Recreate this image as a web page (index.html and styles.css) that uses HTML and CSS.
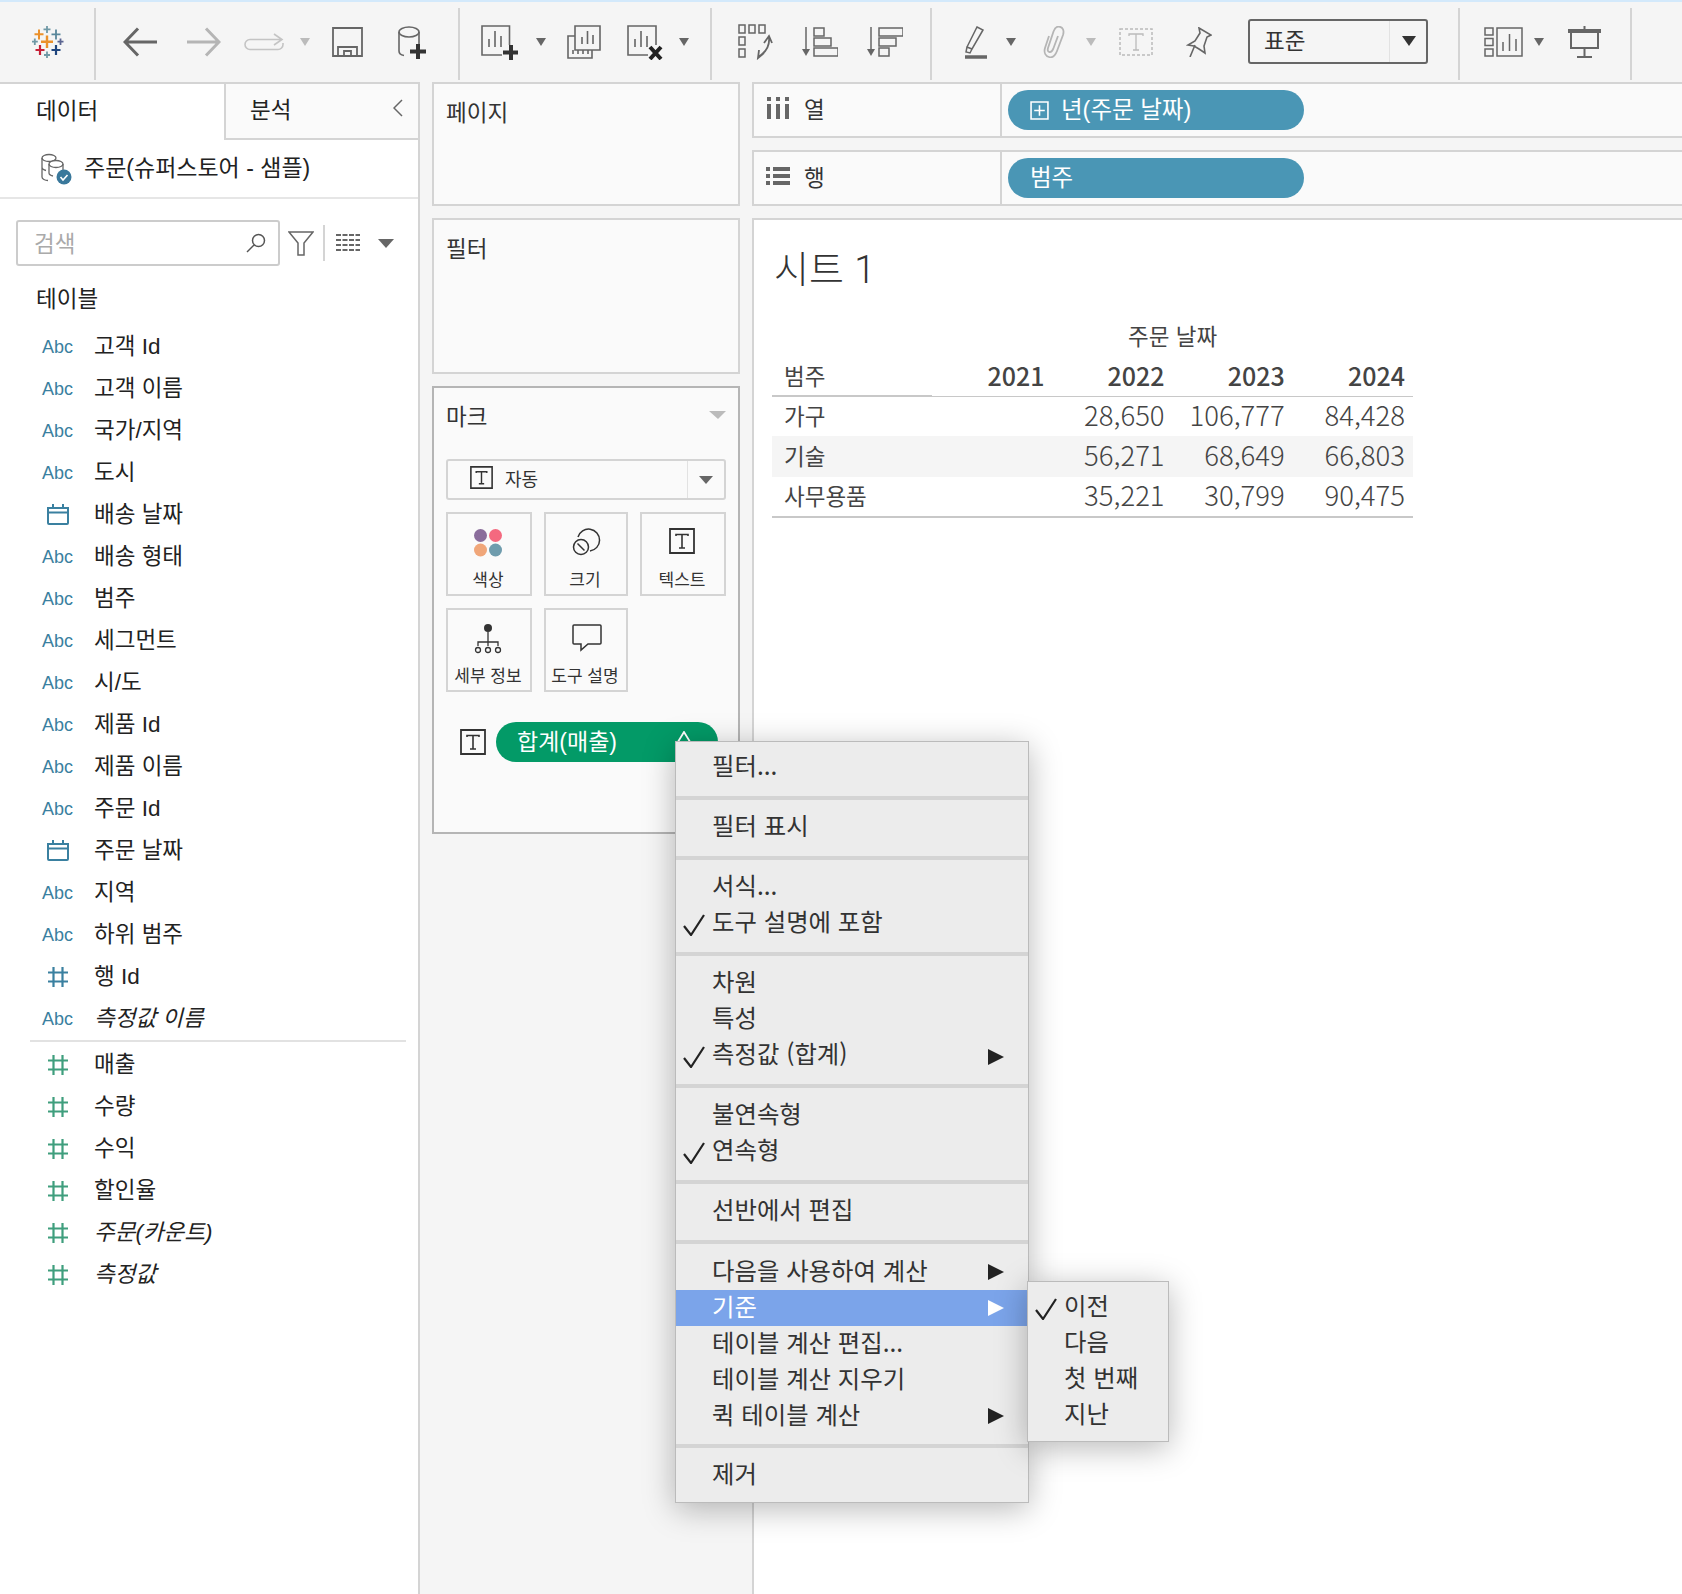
FILE: index.html
```html
<!DOCTYPE html>
<html lang="ko">
<head>
    <meta charset="UTF-8">
    <meta name="viewport" content="width=device-width, initial-scale=1.0">
    <title>Tableau - 시트 1</title>
    <link rel="stylesheet" href="styles.css">
</head>
<body>
    <svg class="defs" width="0" height="0">
        <defs>
            <symbol id="t-box" viewBox="0 0 26 26">
                <path d="M1 1h24v24H1z" fill="none" stroke="#333" stroke-width="1.800"/>
                <path d="M7 8V6.500h12V8M13 6.500V20M10 20h6" fill="none" stroke="#333" stroke-width="1.600"/>
            </symbol>
            <symbol id="cal" viewBox="0 0 22 22">
                <path d="M1 5h20v15a1 1 0 0 1-1 1H2a1 1 0 0 1-1-1zM1 9.500h20M6 1v4M16 1v4" fill="none" stroke="#3a80a0" stroke-width="2"/>
            </symbol>
            <symbol id="hash" viewBox="0 0 20 20">
                <path d="M5.500 0v20M14.500 0v20M0 5.500h20M0 14.500h20" fill="none" stroke="currentColor" stroke-width="2.200"/>
            </symbol>
            <symbol id="check" viewBox="0 0 22 22">
                <path d="M1 12l7 9L21 1" fill="none" stroke="#222" stroke-width="2.200"/>
            </symbol>
        </defs>
    </svg>

    <div class="toolbar">
        <div class="tool-group group-logo">
            <svg class="tool-logo" width="32" height="32" viewBox="0 0 32 32" fill="none" stroke-width="1.800">
                <path d="M15 0v7M11.500 3.300h7" stroke="#7099a6"/>
                <path d="M7 3.500v10M2.500 8.300h9" stroke="#eb912b" stroke-width="2"/>
                <path d="M24 3.500v10M19.500 8.300h9" stroke="#59879b"/>
                <path d="M15 9.500v12.500M9 15.700h12" stroke="#eb912b" stroke-width="2.400"/>
                <path d="M2.800 12.500v6.500M0 15.700h5.800" stroke="#7099a6"/>
                <path d="M28.500 12.500v6.500M25.500 15.700h6" stroke="#5b6591"/>
                <path d="M8 19v10M3.500 24h9" stroke="#c72037" stroke-width="2.200"/>
                <path d="M24 19v10M19.500 24h9" stroke="#1f457e" stroke-width="2.200"/>
                <path d="M15 25.500v6.500M12 29h6" stroke="#7099a6"/>
            </svg>
        </div>
        <div class="tool-group group-history">
            <svg class="tool-back" width="34" height="30" viewBox="0 0 34 30" fill="none" stroke="#666" stroke-width="3"><path d="M15 1.500L2 15l13 13.500M2 15h32"/></svg>
            <svg class="tool-forward" width="34" height="30" viewBox="0 0 34 30" fill="none" stroke="#b5b5b5" stroke-width="3"><path d="M19 1.500L32 15 19 28.500M32 15H0"/></svg>
            <svg class="tool-redo" width="40" height="18" viewBox="0 0 40 18" fill="none" stroke="#c4c4c4" stroke-width="1.600"><path d="M30 1l8 5.500-8 5.500M38 6.500H6a5 5 0 0 0-5 5v0a5 5 0 0 0 5 5h28a5 5 0 0 0 5-5V10"/></svg>
            <span class="caret caret-light caret-redo"></span>
            <svg class="tool-save" width="31" height="30" viewBox="0 0 31 30" fill="none" stroke="#666" stroke-width="1.800"><path d="M1 1h29v28H1zM6 29V20h19v9M12 29v-5h7v5"/></svg>
            <svg class="tool-cylinder" width="28" height="33" viewBox="0 0 28 33" fill="none" stroke="#666" stroke-width="1.600"><ellipse cx="11" cy="6" rx="10" ry="5"/><path d="M1 6v19c0 2.500 2 4 5 4.500M21 6v12"/><path d="M20 18v15M12 25.500h16" stroke="#333" stroke-width="4"/></svg>
        </div>
        <div class="tool-group group-sheet">
            <svg class="tool-new" width="37" height="35" viewBox="0 0 37 35" fill="none" stroke="#666" stroke-width="1.600"><path d="M28.500 20V1H1v29h20M8 22v-8M14 22V6M20 22V11"/><path d="M30 20v15M22 27.500h15" stroke="#333" stroke-width="4"/></svg>
            <span class="caret caret-new"></span>
            <svg class="tool-dup" width="34" height="34" viewBox="0 0 34 34" fill="none" stroke="#666" stroke-width="1.600"><path d="M8 1h25v24H8zM15 19v-7M20.500 19V6M26 19V10M8 11H1v22h24v-8M6 25v4M11 25v4M16 25v4M21 25v4"/></svg>
            <svg class="tool-clear" width="36" height="35" viewBox="0 0 36 35" fill="none" stroke="#666" stroke-width="1.600"><path d="M29 20V1H1v29h20M8 22v-8M14 22V6M20 22V11"/><path d="M23 22l11 12M34 22L23 34" stroke="#222" stroke-width="4"/></svg>
            <span class="caret caret-clear"></span>
        </div>
        <div class="tool-group group-arrange">
            <svg class="tool-swap" width="35" height="36" viewBox="0 0 35 36" fill="none" stroke="#666" stroke-width="1.500"><path d="M1 1h6v8H1zM11 1h6v8h-6zM21 1h6v8h-6zM1 13h6v8H1zM1 25h6v8H1z"/><path d="M31 13c1 9-4 16-11 20M26 19l5-7 3 7M26 29l-6 5 1-8" stroke-width="1.800"/></svg>
            <svg class="tool-sort" width="36" height="30" viewBox="0 0 36 30" fill="none" stroke="#666" stroke-width="1.500"><path d="M4 0v26"/><path d="M0 22h8l-4 7z" fill="#666" stroke="none"/><path d="M12 1h10v8H12zM12 11h17v8H12zM12 21h24v8H12z"/></svg>
            <svg class="tool-sort" width="36" height="30" viewBox="0 0 36 30" fill="none" stroke="#666" stroke-width="1.500"><path d="M4 0v26"/><path d="M0 22h8l-4 7z" fill="#666" stroke="none"/><path d="M12 1h24v8H12zM12 11h17v8H12zM12 21h10v8H12z"/></svg>
        </div>
        <div class="tool-group group-format">
            <svg class="tool-pen" width="22" height="33" viewBox="0 0 22 33" fill="none" stroke="#666" stroke-width="1.500"><path d="M12 1l6 3-11 19-5-2zM2 21l-1 5 4 1 2-4"/><path d="M0 31h22" stroke-width="3.500"/></svg>
            <span class="caret caret-pen"></span>
            <svg class="tool-clip" width="24" height="32" viewBox="0 0 24 32" fill="none" stroke="#b5b5b5" stroke-width="1.800"><path d="M8 10L4 22c-1.500 5 1 8 4 9s6-1 8-6l6-16c1.500-5-.5-7.500-3-8.200s-5 .7-6.500 4.700L7 22c-.7 2.500 0 3.700 1.500 4s2.800-.8 3.800-3.300L17 10"/></svg>
            <span class="caret caret-light caret-clip"></span>
            <svg class="tool-tbox" width="34" height="28" viewBox="0 0 34 28" fill="none" stroke="#bbb"><path d="M1 1h32v26H1z" stroke-width="1.500" stroke-dasharray="3 2"/><path d="M10 8V6h14v2M17 6v16M14 22h6" stroke-width="1.300"/></svg>
            <svg class="tool-pin" width="26" height="30" viewBox="0 0 26 30" fill="none" stroke="#666" stroke-width="1.600"><path d="M13 1l12 7-4 2-3 9 1 7-6-4-5-3-6-1 7-4 5-8zM9 18L4 30"/></svg>
            <div class="fit-select">
                <span class="fit-value">표준</span>
                <span class="fit-arrow"><span class="caret caret-dark"></span></span>
            </div>
        </div>
        <div class="tool-group group-show">
            <svg class="tool-showme" width="39" height="30" viewBox="0 0 39 30" fill="none" stroke="#666" stroke-width="1.500"><path d="M1 1h8v7H1zM1 11.500h8v7H1zM1 22h8v7H1zM13 1h25v28H13zM19 24v-9M25.500 24V7M32 24V12"/></svg>
            <span class="caret caret-show"></span>
            <svg class="tool-present" width="33" height="32" viewBox="0 0 33 32" fill="none" stroke="#666" stroke-width="2"><path d="M3 4v18h27V4M16.500 0v4M16.500 22v9M9 31h15"/><path d="M0 5h33" stroke-width="4"/></svg>
        </div>
    </div>

    <div class="workspace">
        <div class="data-pane">
            <div class="pane-tabs">
                <div class="pane-tab tab-active">데이터</div>
                <div class="pane-tab tab-other">
                    <span>분석</span>
                    <svg width="10" height="18" viewBox="0 0 10 18" fill="none" stroke="#666" stroke-width="1.500"><path d="M9 1L1 9l8 8"/></svg>
                </div>
            </div>
            <div class="source-row">
                <svg width="32" height="32" viewBox="0 0 32 32" fill="none" stroke="#666" stroke-width="1.300">
                    <ellipse cx="9" cy="5" rx="7" ry="3.500"/>
                    <path d="M2 5v19c0 2 3 3.500 6 3.500M2 14c0 2 2 3 4 3.500"/>
                    <ellipse cx="16" cy="11" rx="7" ry="3.500" fill="#fff"/>
                    <path d="M9 11v9c0 1.500 2 2.500 4 3M23 11v6"/>
                    <circle cx="24" cy="24" r="7.500" fill="#39789b" stroke="none"/>
                    <path d="M20.500 24l2.500 3 4.500-5" stroke="#fff" stroke-width="1.600"/>
                </svg>
                <span class="source-name">주문(슈퍼스토어 - 샘플)</span>
            </div>
            <div class="search-row">
                <div class="search-box">
                    <span class="search-text">검색</span>
                    <svg width="20" height="20" viewBox="0 0 20 20" fill="none" stroke="#555" stroke-width="1.500"><circle cx="12.500" cy="7.500" r="6"/><path d="M8 12l-7 7"/></svg>
                </div>
                <svg class="funnel" width="26" height="25" viewBox="0 0 26 25" fill="none" stroke="#666" stroke-width="1.500"><path d="M1 1h24l-9 11v12h-6V12z"/></svg>
                <span class="search-divider"></span>
                <svg class="list-icon" width="24" height="18" viewBox="0 0 24 18" fill="none" stroke="#666" stroke-width="2" stroke-dasharray="5 1.500"><path d="M0 1h24M0 6h24M0 11h24M0 16h24"/></svg>
                <span class="caret caret-list"></span>
            </div>
            <div class="section-title">테이블</div>
            <ul class="fields">
                <li class="field"><span class="field-type abc">Abc</span><span>고객 Id</span></li>
                <li class="field"><span class="field-type abc">Abc</span><span>고객 이름</span></li>
                <li class="field"><span class="field-type abc">Abc</span><span>국가/지역</span></li>
                <li class="field"><span class="field-type abc">Abc</span><span>도시</span></li>
                <li class="field"><span class="field-type date"><svg width="22" height="22"><use href="#cal"/></svg></span><span>배송 날짜</span></li>
                <li class="field"><span class="field-type abc">Abc</span><span>배송 형태</span></li>
                <li class="field"><span class="field-type abc">Abc</span><span>범주</span></li>
                <li class="field"><span class="field-type abc">Abc</span><span>세그먼트</span></li>
                <li class="field"><span class="field-type abc">Abc</span><span>시/도</span></li>
                <li class="field"><span class="field-type abc">Abc</span><span>제품 Id</span></li>
                <li class="field"><span class="field-type abc">Abc</span><span>제품 이름</span></li>
                <li class="field"><span class="field-type abc">Abc</span><span>주문 Id</span></li>
                <li class="field"><span class="field-type date"><svg width="22" height="22"><use href="#cal"/></svg></span><span>주문 날짜</span></li>
                <li class="field"><span class="field-type abc">Abc</span><span>지역</span></li>
                <li class="field"><span class="field-type abc">Abc</span><span>하위 범주</span></li>
                <li class="field"><span class="field-type dim"><svg width="20" height="20"><use href="#hash"/></svg></span><span>행 Id</span></li>
                <li class="field italic"><span class="field-type abc">Abc</span><span>측정값 이름</span></li>
            </ul>
            <ul class="fields measures">
                <li class="field"><span class="field-type measure"><svg width="20" height="20"><use href="#hash"/></svg></span><span>매출</span></li>
                <li class="field"><span class="field-type measure"><svg width="20" height="20"><use href="#hash"/></svg></span><span>수량</span></li>
                <li class="field"><span class="field-type measure"><svg width="20" height="20"><use href="#hash"/></svg></span><span>수익</span></li>
                <li class="field"><span class="field-type measure"><svg width="20" height="20"><use href="#hash"/></svg></span><span>할인율</span></li>
                <li class="field italic"><span class="field-type measure"><svg width="20" height="20"><use href="#hash"/></svg></span><span>주문(카운트)</span></li>
                <li class="field italic"><span class="field-type measure"><svg width="20" height="20"><use href="#hash"/></svg></span><span>측정값</span></li>
            </ul>
        </div>

        <div class="cards-col">
            <div class="card pages-card"><div class="card-title">페이지</div></div>
            <div class="card filters-card"><div class="card-title">필터</div></div>
            <div class="card marks-card">
                <div class="marks-head">
                    <span>마크</span>
                    <span class="caret caret-marks"></span>
                </div>
                <div class="mark-type">
                    <div class="mark-type-value">
                        <svg width="23" height="23"><use href="#t-box"/></svg>
                        <span>자동</span>
                    </div>
                    <span class="mark-type-arrow"><span class="caret caret-type"></span></span>
                </div>
                <div class="mark-grid">
                    <div class="mark-btn">
                        <svg width="30" height="30" viewBox="0 0 30 30">
                            <circle cx="7.500" cy="7.500" r="6.500" fill="#8a6d9b"/>
                            <circle cx="22.500" cy="7.500" r="6.500" fill="#f4697f"/>
                            <circle cx="7.500" cy="22" r="6.500" fill="#f0a679"/>
                            <circle cx="22.500" cy="22" r="6.500" fill="#6f9cad"/>
                        </svg>
                        <span>색상</span>
                    </div>
                    <div class="mark-btn">
                        <svg class="icon-mid" width="30" height="30" viewBox="0 0 30 30" fill="none" stroke="#333" stroke-width="1.500">
                            <path d="M6 11a11 11 0 1 1 12 14"/>
                            <circle cx="9" cy="21" r="7.500"/>
                            <path d="M5.500 17.500l7 7"/>
                        </svg>
                        <span>크기</span>
                    </div>
                    <div class="mark-btn">
                        <svg class="icon-text" width="26" height="26"><use href="#t-box"/></svg>
                        <span>텍스트</span>
                    </div>
                    <div class="mark-btn">
                        <svg width="28" height="30" viewBox="0 0 28 30" fill="none" stroke="#333" stroke-width="1.300">
                            <circle cx="14" cy="4" r="4" fill="#333" stroke="none"/>
                            <path d="M14 8v14M4 22v-4h20v4"/>
                            <circle cx="4" cy="26" r="2.500"/><circle cx="14" cy="26" r="2.500"/><circle cx="24" cy="26" r="2.500"/>
                        </svg>
                        <span>세부 정보</span>
                    </div>
                    <div class="mark-btn">
                        <svg class="icon-mid" width="30" height="28" viewBox="0 0 30 28" fill="none" stroke="#333" stroke-width="1.500"><path d="M2 1h26a1 1 0 0 1 1 1v17a1 1 0 0 1-1 1H16l-7 6v-6H2a1 1 0 0 1-1-1V2a1 1 0 0 1 1-1z"/></svg>
                        <span>도구 설명</span>
                    </div>
                </div>
                <div class="mark-field">
                    <svg width="26" height="26"><use href="#t-box"/></svg>
                    <div class="pill pill-measure">
                        <span class="pill-text">합계(매출)</span>
                        <svg class="pill-delta" width="18" height="14" viewBox="0 0 18 14" fill="none" stroke="#fff" stroke-width="1.800"><path d="M9 1L1 14h16z"/></svg>
                    </div>
                </div>
            </div>
        </div>

        <div class="view-col">
            <div class="shelf">
                <div class="shelf-label">
                    <svg width="24" height="22" viewBox="0 0 22 22" fill="#666"><path d="M0 7h4v15H0zM9 7h4v15H9zM18 7h4v15h-4zM0 0h4v4H0zM9 0h4v4H9zM18 0h4v4h-4z"/></svg>
                    <span>열</span>
                </div>
                <div class="shelf-pills">
                    <div class="pill pill-dim">
                        <svg width="19" height="19" viewBox="0 0 18 18" fill="none" stroke="#fff" stroke-width="1.500"><path d="M1 1h16v16H1zM9 4v10M4 9h10"/></svg>
                        <span class="pill-text">년(주문 날짜)</span>
                    </div>
                </div>
            </div>
            <div class="shelf">
                <div class="shelf-label">
                    <svg width="24" height="20" viewBox="0 0 24 20" fill="#666"><path d="M0 1h4v4H0zM7 1h17v4H7zM0 8h4v4H0zM7 8h17v4H7zM0 15h4v4H0zM7 15h17v4H7z"/></svg>
                    <span>행</span>
                </div>
                <div class="shelf-pills">
                    <div class="pill pill-dim"><span class="pill-text">범주</span></div>
                </div>
            </div>
            <div class="sheet">
                <h1 class="sheet-title">시트 1</h1>
                <table class="crosstab">
                    <colgroup>
                        <col class="col-name">
                        <col class="col-year">
                        <col class="col-year">
                        <col class="col-year">
                        <col class="col-year">
                    </colgroup>
                    <tr class="top-head">
                        <th></th>
                        <th colspan="4">주문 날짜</th>
                    </tr>
                    <tr class="year-head">
                        <th class="row-name">범주</th>
                        <th>2021</th>
                        <th>2022</th>
                        <th>2023</th>
                        <th>2024</th>
                    </tr>
                    <tr>
                        <td class="row-name">가구</td>
                        <td></td>
                        <td>28,650</td>
                        <td>106,777</td>
                        <td>84,428</td>
                    </tr>
                    <tr class="band">
                        <td class="row-name">기술</td>
                        <td></td>
                        <td>56,271</td>
                        <td>68,649</td>
                        <td>66,803</td>
                    </tr>
                    <tr class="last-row">
                        <td class="row-name">사무용품</td>
                        <td></td>
                        <td>35,221</td>
                        <td>30,799</td>
                        <td>90,475</td>
                    </tr>
                </table>
            </div>
        </div>
    </div>

    <div class="menu context-menu">
        <div class="menu-group">
            <div class="menu-item">필터...</div>
        </div>
        <div class="menu-group">
            <div class="menu-item">필터 표시</div>
        </div>
        <div class="menu-group">
            <div class="menu-item">서식...</div>
            <div class="menu-item checked"><svg class="menu-check" width="22" height="22"><use href="#check"/></svg>도구 설명에 포함</div>
        </div>
        <div class="menu-group">
            <div class="menu-item">차원</div>
            <div class="menu-item">특성</div>
            <div class="menu-item checked has-sub"><svg class="menu-check" width="22" height="22"><use href="#check"/></svg>측정값 (합계)</div>
        </div>
        <div class="menu-group">
            <div class="menu-item">불연속형</div>
            <div class="menu-item checked"><svg class="menu-check" width="22" height="22"><use href="#check"/></svg>연속형</div>
        </div>
        <div class="menu-group">
            <div class="menu-item">선반에서 편집</div>
        </div>
        <div class="menu-group calc-group">
            <div class="menu-item has-sub">다음을 사용하여 계산</div>
            <div class="menu-item has-sub active">기준</div>
            <div class="menu-item">테이블 계산 편집...</div>
            <div class="menu-item">테이블 계산 지우기</div>
            <div class="menu-item has-sub">퀵 테이블 계산</div>
        </div>
        <div class="menu-group">
            <div class="menu-item">제거</div>
        </div>
    </div>

    <div class="menu sub-menu">
        <div class="menu-item checked"><svg class="menu-check" width="22" height="22"><use href="#check"/></svg>이전</div>
        <div class="menu-item">다음</div>
        <div class="menu-item">첫 번째</div>
        <div class="menu-item">지난</div>
    </div>
</body>
</html>
```

FILE: styles.css
```css
* {
    box-sizing: border-box;
}

body {
    margin: 0;
    width: 1682px;
    height: 1594px;
    overflow: hidden;
    position: relative;
    background-color: #f5f5f5;
    color: #333;
    font-family: "Liberation Sans", "Noto Sans CJK KR", sans-serif;
    font-size: 22.5px;
}

.defs {
    position: absolute;
}

ul {
    list-style: none;
    margin: 0;
    padding: 0;
}

svg {
    display: block;
    flex: none;
}

/* carets */
.caret {
    display: block;
    flex: none;
    width: 0;
    height: 0;
    border-left: 5px solid transparent;
    border-right: 5px solid transparent;
    border-top: 8px solid #666;
}
.caret-light {
    border-top-color: #bbb;
}
.caret-dark {
    border-left-width: 7px;
    border-right-width: 7px;
    border-top: 10px solid #333;
}

/* toolbar */
.toolbar {
    display: flex;
    height: 82px;
    border-top: 2px solid #d3e9fb;
}
.tool-group {
    display: flex;
    align-items: center;
    position: relative;
    flex: none;
}
.tool-group::after {
    content: "";
    position: absolute;
    right: 0;
    top: 6px;
    bottom: 2px;
    width: 2px;
    background-color: #d4d4d4;
}
.group-logo { width: 96px; }
.group-history { width: 364px; }
.group-sheet { width: 252px; }
.group-arrange { width: 220px; }
.group-format { width: 528px; }
.group-show { width: 172px; }

.tool-logo { margin-left: 32px; }
.tool-back { margin-left: 27px; }
.tool-forward { margin-left: 30px; }
.tool-redo { margin-left: 23px; }
.caret-redo { margin-left: 16px; }
.tool-save { margin-left: 22px; }
.tool-cylinder { margin-left: 35px; }
.tool-new { margin-left: 21px; }
.caret-new { margin-left: 18px; }
.tool-dup { margin-left: 21px; }
.tool-clear { margin-left: 26px; }
.caret-clear { margin-left: 16px; }
.tool-swap { margin-left: 26px; }
.tool-sort { margin-left: 29px; }
.tool-pen { margin-left: 33px; }
.caret-pen { margin-left: 19px; }
.tool-clip { margin-left: 25px; }
.caret-clip { margin-left: 21px; }
.tool-tbox { margin-left: 23px; }
.tool-pin { margin-left: 33px; }
.tool-showme { margin-left: 24px; }
.caret-show { margin-left: 11px; }
.tool-present { margin-left: 24px; }

.fit-select {
    margin: -2px 0 0 36px;
    width: 180px;
    height: 45px;
    display: flex;
    border: 2px solid #666;
    border-radius: 3px;
}
.fit-value {
    flex: 1;
    padding-left: 14px;
    line-height: 41px;
    border-right: 1px solid #e2e2e2;
}
.fit-arrow {
    width: 36px;
    display: flex;
    align-items: center;
    justify-content: center;
    padding-left: 2px;
}

/* main layout */
.workspace {
    display: flex;
    height: 1512px;
}

/* data pane */
.data-pane {
    width: 420px;
    flex: none;
    background-color: #fff;
    border-top: 2px solid #d4d4d4;
    border-right: 2px solid #d4d4d4;
    color: #222;
}
.pane-tabs {
    display: flex;
    height: 56px;
}
.pane-tab {
    display: flex;
    align-items: center;
    padding-bottom: 6px;
}
.tab-active {
    width: 224px;
    padding-left: 36px;
}
.tab-other {
    flex: 1;
    justify-content: space-between;
    padding: 0 15px 6px 24px;
    background-color: #fafafa;
    border-left: 2px solid #d4d4d4;
    border-bottom: 2px solid #d4d4d4;
}
.source-row {
    display: flex;
    align-items: center;
    gap: 12px;
    height: 59px;
    padding-left: 40px;
    border-bottom: 2px solid #e6e6e6;
    font-size: 23px;
}
.source-name {
    padding-bottom: 5px;
}
.search-row {
    display: flex;
    align-items: center;
    margin-top: 21px;
    padding-left: 16px;
}
.search-box {
    width: 264px;
    height: 46px;
    display: flex;
    align-items: center;
    justify-content: space-between;
    padding: 0 12px 0 16px;
    border: 2px solid #ccc;
    border-radius: 3px;
}
.search-text {
    padding-bottom: 2px;
    color: #aaa;
}
.funnel {
    margin-left: 8px;
}
.search-divider {
    width: 2px;
    height: 36px;
    margin-left: 9px;
    background-color: #d4d4d4;
}
.list-icon {
    margin-left: 11px;
}
.caret-list {
    margin-left: 18px;
    border-left-width: 8px;
    border-right-width: 8px;
    border-top-width: 9px;
}
.section-title {
    height: 57px;
    padding: 9px 0 0 36px;
    line-height: 50px;
}
.fields {
    padding-bottom: 3px;
}
.measures {
    position: relative;
    padding-top: 1px;
}
.measures::before {
    content: "";
    position: absolute;
    left: 30px;
    top: 0;
    width: 376px;
    height: 2px;
    background-color: #e2e2e2;
}
.field {
    display: flex;
    align-items: center;
    height: 42px;
}
.field-type {
    width: 94px;
    display: flex;
    justify-content: flex-end;
    flex: none;
}
.abc {
    padding: 6px 21px 0 0;
    font-size: 18px;
    color: #3a80a0;
}
.date {
    padding: 3px 25px 0 0;
}
.dim {
    padding: 5px 26px 0 0;
    color: #3a80a0;
}
.measure {
    padding: 5px 26px 0 0;
    color: #3f9e7d;
}
.italic span:last-child {
    font-style: italic;
}

/* cards column */
.cards-col {
    width: 308px;
    margin-left: 12px;
    flex: none;
    display: flex;
    flex-direction: column;
    gap: 12px;
}
.card {
    background-color: #fafafa;
    border: 2px solid #d4d4d4;
}
.card-title {
    padding: 13px 0 0 12px;
    line-height: 34px;
}
.pages-card {
    height: 124px;
}
.filters-card {
    height: 156px;
}
.marks-card {
    height: 448px;
    padding: 0 12px;
    border-color: #b5b5b5;
}
.marks-head {
    display: flex;
    justify-content: space-between;
    align-items: center;
    height: 58px;
    padding-bottom: 4px;
}
.caret-marks {
    border-left-width: 9px;
    border-right-width: 8px;
    border-top: 8px solid #bbb;
}
.mark-type {
    display: flex;
    height: 41px;
    margin-top: 13px;
    border: 2px solid #d4d4d4;
    border-radius: 3px;
}
.mark-type-value {
    flex: 1;
    display: flex;
    align-items: center;
    gap: 12px;
    padding: 0 0 4px 22px;
    font-size: 18px;
    border-right: 1px solid #e2e2e2;
}
.mark-type-arrow {
    width: 36px;
    display: flex;
    align-items: center;
    justify-content: center;
}
.caret-type {
    border-left-width: 7px;
    border-right-width: 7px;
    border-top-width: 8px;
}
.mark-grid {
    display: grid;
    grid-template-columns: 86px 84px 86px;
    grid-auto-rows: 84px;
    gap: 12px;
    margin-top: 12px;
}
.mark-btn {
    display: flex;
    flex-direction: column;
    align-items: center;
    justify-content: flex-end;
    gap: 8px;
    padding: 0 2px 3px 0;
    border: 2px solid #d4d4d4;
    font-size: 17px;
    white-space: nowrap;
}
.icon-mid {
    margin: 0 0 2px 4px;
}
.icon-text {
    margin-bottom: 4px;
}
.mark-field {
    display: flex;
    align-items: center;
    gap: 10px;
    margin-top: 30px;
    padding-left: 14px;
}

/* pills */
.pill {
    display: flex;
    align-items: center;
    border-radius: 20px;
    color: #fff;
    height: 40px;
}
.pill-text {
    padding-bottom: 4px;
}
.pill-dim {
    width: 296px;
    gap: 12px;
    padding-left: 22px;
    font-size: 23.5px;
    background-color: #4a96b5;
}
.pill-measure {
    width: 222px;
    padding-left: 21px;
    font-size: 23px;
    background-color: #039a67;
    position: relative;
}
.pill-delta {
    position: absolute;
    left: 179px;
    top: 9px;
}

/* shelves and view */
.view-col {
    flex: 1;
    margin-left: 12px;
    display: flex;
    flex-direction: column;
    gap: 12px;
}
.shelf {
    display: flex;
    height: 56px;
    background-color: #fafafa;
    border-top: 2px solid #d4d4d4;
    border-bottom: 2px solid #d4d4d4;
    border-left: 2px solid #d4d4d4;
}
.shelf-label {
    width: 248px;
    display: flex;
    align-items: center;
    gap: 14px;
    padding: 0 0 4px 12px;
    border-right: 2px solid #d4d4d4;
}
.shelf-pills {
    padding: 6px 0 0 6px;
}
.sheet {
    flex: 1;
    background-color: #fff;
    border-top: 2px solid #d4d4d4;
    border-left: 2px solid #d4d4d4;
    padding-left: 18px;
}
.sheet-title {
    margin: 0;
    padding: 25px 0 0 2px;
    font-family: "Roboto", "Noto Sans CJK KR", sans-serif;
    font-size: 38px;
    font-weight: 300;
    line-height: 50px;
    word-spacing: 1px;
    color: #333;
}
.crosstab {
    width: 641px;
    margin-top: 20px;
    border-collapse: collapse;
    table-layout: fixed;
    font-family: "Noto Sans CJK KR", sans-serif;
    font-size: 27.5px;
    font-weight: 300;
    color: #444;
}
.col-name {
    width: 160px;
}
.col-year {
    width: 120px;
}
.crosstab td,
.crosstab th {
    height: 40px;
    padding: 0 8px 3px 0;
    line-height: 1;
    text-align: right;
    white-space: nowrap;
}
.crosstab .row-name {
    padding-left: 12px;
    text-align: left;
    font-size: 22.5px;
    font-weight: 400;
}
.crosstab .top-head th {
    height: 41px;
    padding: 0;
    text-align: center;
    font-size: 22.5px;
    font-weight: 400;
}
.crosstab .year-head th {
    padding-bottom: 0;
    border-bottom: 1px solid #c8c8c8;
    font-size: 25px;
    font-weight: 500;
}
.crosstab .year-head .row-name {
    border-bottom: 2px solid #c8c8c8;
    font-size: 22.5px;
    font-weight: 400;
}
.crosstab .band td {
    height: 41px;
    background-color: #f5f5f5;
}
.last-row td {
    border-bottom: 2px solid #c8c8c8;
}

/* context menus */
.menu {
    position: absolute;
    background-color: #ececec;
    border: 1px solid #bbb;
    box-shadow: 0 6px 30px rgba(0, 0, 0, 0.28);
    font-family: "Noto Sans CJK KR", sans-serif;
    font-size: 24.4px;
    color: #333;
}
.context-menu {
    left: 675px;
    top: 741px;
    width: 354px;
    height: 762px;
    display: flex;
    flex-direction: column;
}
.menu-group {
    padding: 9px 0 11px;
    border-bottom: 4px solid #d4d4d4;
}
.menu-group:first-child {
    padding-top: 7px;
}
.menu-group:last-child {
    border-bottom: none;
}
.calc-group {
    padding: 10px 0;
}
.menu-item {
    position: relative;
    height: 36px;
    line-height: 32px;
    padding-left: 36px;
    white-space: nowrap;
}
.menu-item.active {
    background-color: #7ba4ea;
    color: #fff;
}
.menu-check {
    position: absolute;
    left: 7px;
    top: 9px;
}
.has-sub::after {
    content: "";
    position: absolute;
    left: 312px;
    top: 12px;
    border-top: 8px solid transparent;
    border-bottom: 8px solid transparent;
    border-left: 16px solid #222;
}
.calc-group .has-sub::after {
    top: 10px;
}
.active::after {
    border-left-color: #fff;
}
.sub-menu {
    left: 1027px;
    top: 1281px;
    width: 142px;
    height: 161px;
    padding-top: 7px;
}
```
